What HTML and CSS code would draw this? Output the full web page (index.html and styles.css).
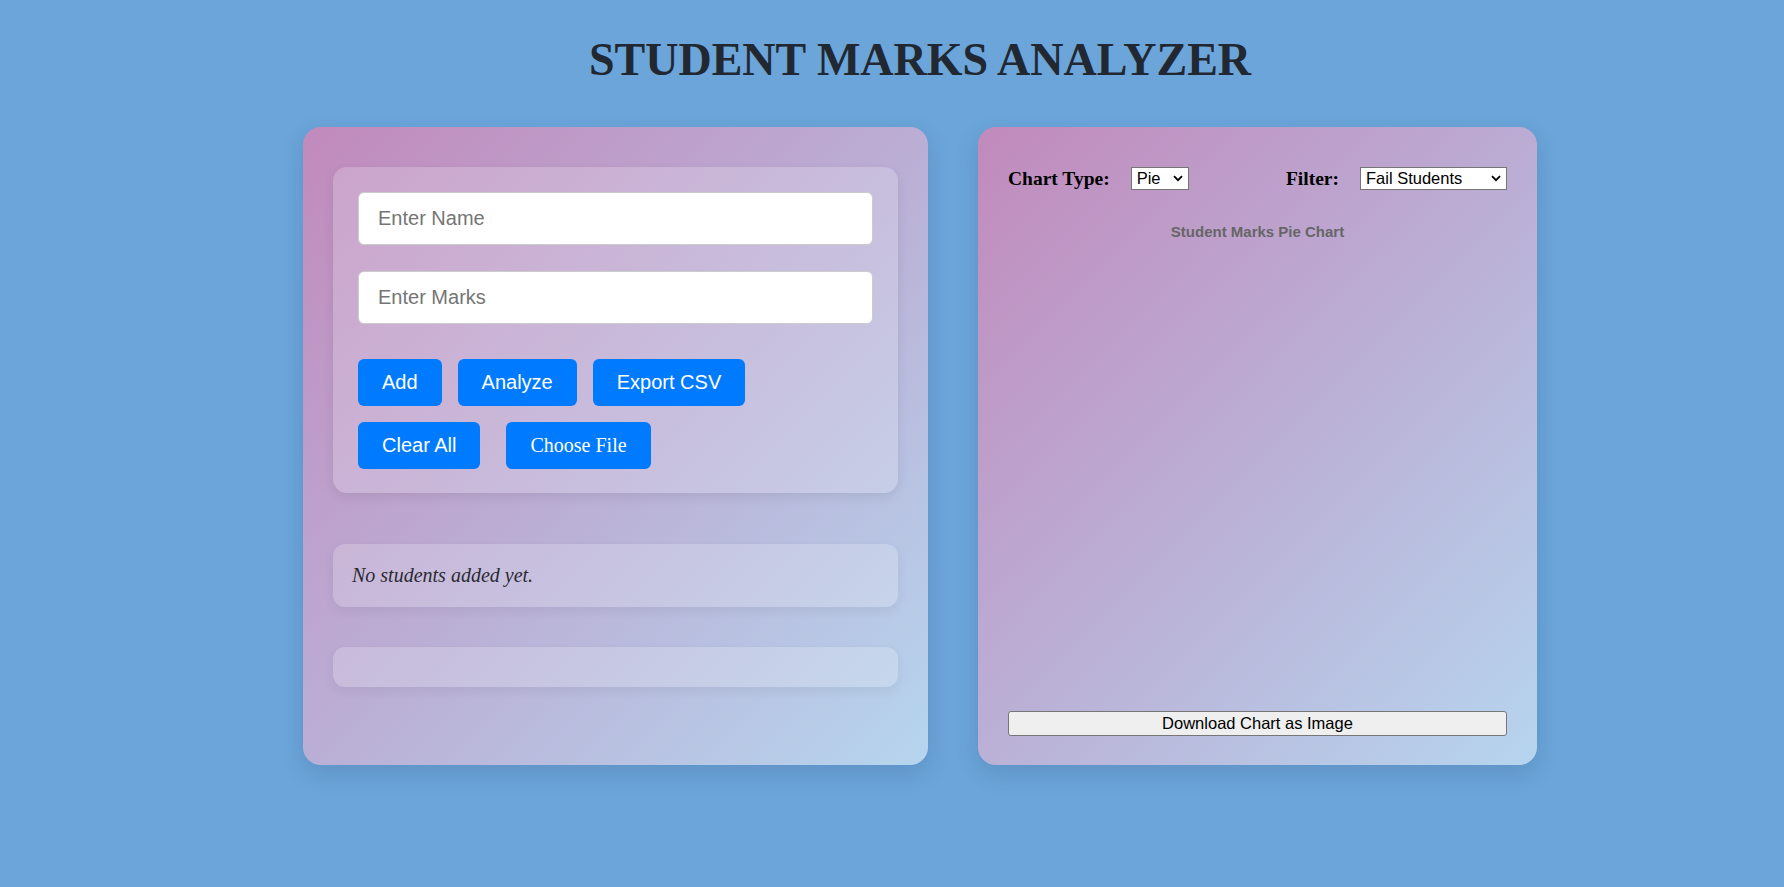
FILE: index.html
```html
<!DOCTYPE html>
<html lang="en">
<head>
<meta charset="utf-8">
<title>Student Marks Analyzer</title>
<link rel="stylesheet" href="styles.css">
</head>
<body>
<div class="page">
  <h1 class="title">STUDENT MARKS ANALYZER</h1>
  <div class="cards">
    <section class="card card-left">
      <div class="form-box">
        <input class="field" type="text" placeholder="Enter Name">
        <input class="field field-marks" type="text" placeholder="Enter Marks">
        <div class="btn-row">
          <button class="btn">Add</button>
          <button class="btn">Analyze</button>
          <button class="btn">Export CSV</button>
        </div>
        <div class="btn-row btn-row-2">
          <button class="btn">Clear All</button>
          <label class="btn btn-file">Choose File</label>
        </div>
      </div>
      <div class="panel status"><p class="status-text">No students added yet.</p></div>
      <div class="panel empty"></div>
    </section>
    <section class="card card-right">
      <div class="controls">
        <div class="ctrl">
          <label class="ctrl-label">Chart Type:</label>
          <span class="sel sel-type">
            <select class="select"><option>Pie</option><option>Bar</option></select>
            <svg class="chev" width="10" height="7" viewBox="0 0 10 7"><path d="M1 1.2 L5 5.2 L9 1.2" fill="none" stroke="#000" stroke-width="1.8"/></svg>
          </span>
        </div>
        <div class="ctrl">
          <label class="ctrl-label">Filter:</label>
          <span class="sel sel-filter">
            <select class="select"><option>Fail Students</option><option>All Students</option><option>Pass Students</option></select>
            <svg class="chev" width="10" height="7" viewBox="0 0 10 7"><path d="M1 1.2 L5 5.2 L9 1.2" fill="none" stroke="#000" stroke-width="1.8"/></svg>
          </span>
        </div>
      </div>
      <div class="chart-area">
        <div class="chart-title">Student Marks Pie Chart</div>
      </div>
      <button class="download">Download Chart as Image</button>
    </section>
  </div>
</div>
</body>
</html>
```

FILE: styles.css
```css
html, body {
  margin: 0;
  padding: 0;
}
body {
  background: #6ba5d9;
  font-family: "Liberation Serif", "Times New Roman", serif;
  min-height: 100vh;
}
.page {
  padding-left: 56px;
}
.title {
  margin: 34px 0 41px;
  font-size: 46px;
  line-height: 52px;
  font-weight: bold;
  text-align: center;
  color: #222831;
}
.cards {
  display: flex;
  justify-content: center;
  align-items: stretch;
  gap: 50px;
}
.card {
  box-sizing: border-box;
  border-radius: 18px;
  background: linear-gradient(135deg, #c18abc 0%, #bbaed5 50%, #b6d5ee 100%);
  box-shadow: 0 8px 22px rgba(40, 60, 110, 0.18);
}
.card-left {
  width: 625px;
  padding: 40px 30px 30px;
}
.card-right {
  width: 559px;
  padding: 40px 30px 29px;
  display: flex;
  flex-direction: column;
}
.form-box {
  padding: 25px 25px 24px;
  border-radius: 14px;
  background: rgba(255, 255, 255, 0.2);
  box-shadow: 0 4px 12px rgba(0, 0, 0, 0.08);
}
.field {
  display: block;
  box-sizing: border-box;
  width: 100%;
  height: 53px;
  margin: 0;
  padding: 0 19px;
  border: 1px solid #cccccc;
  border-radius: 6px;
  background: #fff;
  font-family: "Liberation Sans", Arial, sans-serif;
  font-size: 20px;
  color: #222;
  outline: none;
}
.field::placeholder {
  color: #757575;
}
.field-marks {
  margin-top: 26px;
}
.btn-row {
  display: flex;
  gap: 16px;
  margin-top: 35px;
}
.btn-row-2 {
  margin-top: 16px;
}
.btn {
  display: inline-block;
  padding: 12px 24px;
  border: none;
  border-radius: 6px;
  background: #007bff;
  color: #fff;
  font-family: "Liberation Sans", Arial, sans-serif;
  font-size: 20px;
  line-height: 23px;
  cursor: pointer;
}
.btn-file {
  font-family: "Liberation Serif", "Times New Roman", serif;
  margin-left: 10px;
}
.panel {
  border-radius: 12px;
  background: rgba(255, 255, 255, 0.2);
  box-shadow: 0 4px 12px rgba(0, 0, 0, 0.06);
}
.status {
  margin-top: 51px;
  padding: 20px 19px;
}
.status-text {
  margin: 0;
  font-size: 20px;
  line-height: 23px;
  font-style: italic;
  color: #2b2b33;
}
.empty {
  margin-top: 40px;
  height: 40px;
}
.controls {
  display: flex;
  justify-content: space-between;
  align-items: center;
  height: 23px;
}
.ctrl {
  display: flex;
  align-items: center;
  gap: 21px;
}
.ctrl-label {
  font-size: 19.5px;
  font-weight: bold;
  color: #000;
}
.sel {
  position: relative;
  display: inline-block;
  height: 23px;
}
.select {
  appearance: none;
  -webkit-appearance: none;
  box-sizing: border-box;
  height: 23px;
  margin: 0;
  padding: 0 0 0 5px;
  border: 1px solid #767676;
  border-radius: 0;
  background: #fff;
  color: #000;
  font-family: "Liberation Sans", Arial, sans-serif;
  font-size: 16.5px;
  line-height: 21px;
}
.sel-type .select {
  width: 58px;
}
.sel-filter .select {
  width: 147px;
}
.chev {
  position: absolute;
  right: 6px;
  top: 8px;
  pointer-events: none;
}
.chart-area {
  height: 521px;
  box-sizing: border-box;
  padding-top: 33px;
}
.chart-title {
  text-align: center;
  font-family: "Liberation Sans", Arial, sans-serif;
  font-weight: bold;
  font-size: 15px;
  line-height: 17px;
  color: #666;
}
.download {
  display: block;
  box-sizing: border-box;
  width: 100%;
  height: 25px;
  margin: 0;
  padding: 0 6px;
  border: 1px solid #767676;
  border-radius: 3px;
  background: #efefef;
  color: #000;
  font-family: "Liberation Sans", Arial, sans-serif;
  font-size: 16.5px;
  line-height: 21px;
}
```
